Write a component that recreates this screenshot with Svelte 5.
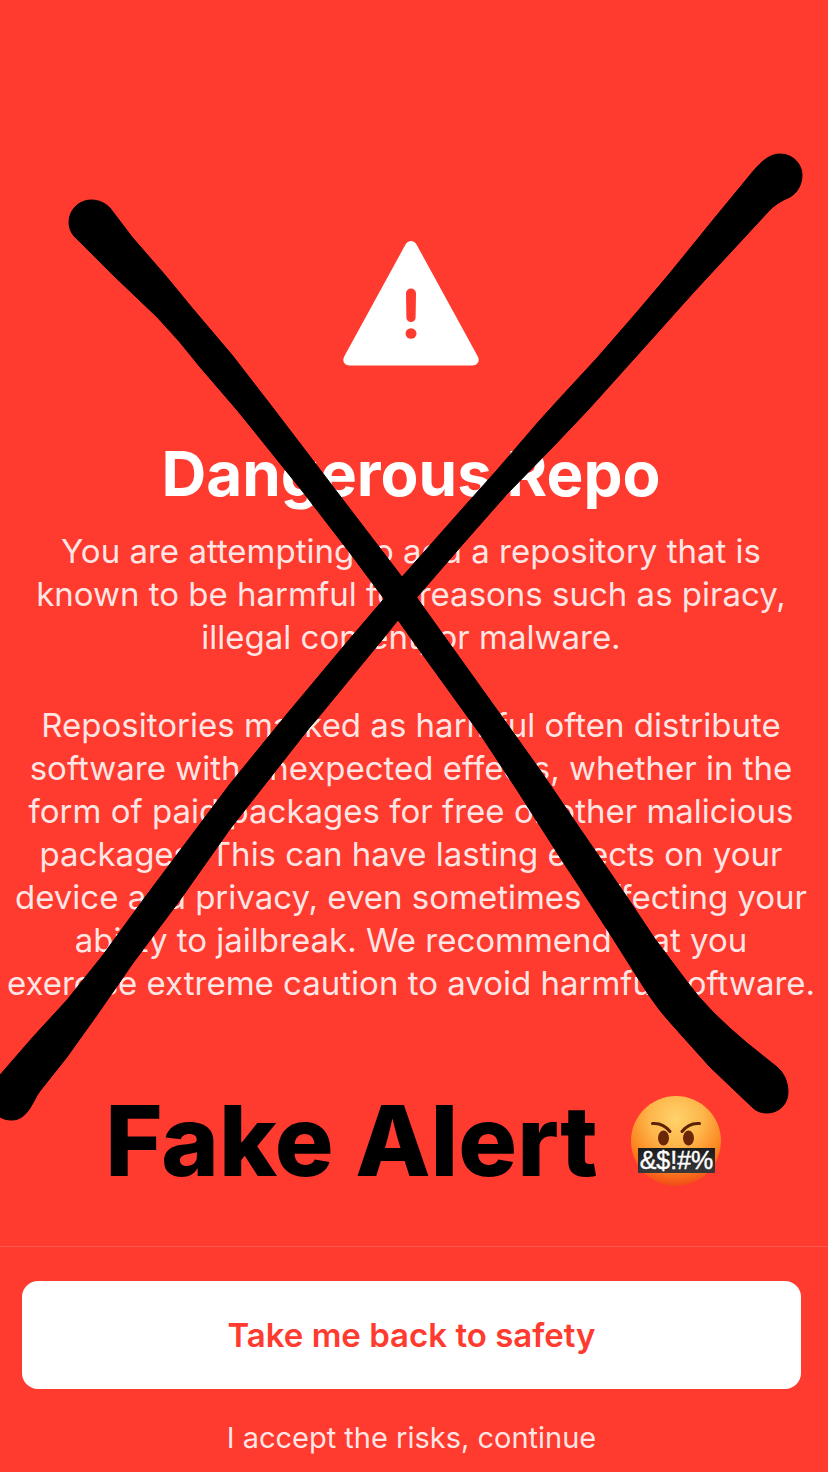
<script>
  const summary = [
    'You are attempting to add a repository that is',
    'known to be harmful for reasons such as piracy,',
    'illegal content, or malware.'
  ];
  const details = [
    'Repositories marked as harmful often distribute',
    'software with unexpected effects, whether in the',
    'form of paid packages for free or other malicious',
    'packages. This can have lasting effects on your',
    'device and privacy, even sometimes affecting your',
    'ability to jailbreak. We recommend that you',
    'exercise extreme caution to avoid harmful software.'
  ];
</script>

<div class="screen">
  <main>
    <svg class="warning" viewBox="0 0 136 126" aria-hidden="true">
      <path d="M62.500 4.500C65-0.200 71-0.200 73.500 4.500L134.800 116.500C137.200 121 134.500 125.500 129.500 125.500H6.500C1.500 125.500-1.200 121 1.200 116.500Z" fill="#fff" />
      <path d="M63 53.500a5 5 0 0 1 10 0L72.600 77.500a4.600 4.600 0 0 1-9.200 0Z" fill="#ff3b30" />
      <ellipse cx="68" cy="93.500" rx="5.500" ry="5.200" fill="#ff3b30" />
    </svg>
    <h1>Dangerous Repo</h1>
    <p>{#each summary as line, i}{#if i}<br />{/if}{line}{/each}</p>
    <p>{#each details as line, i}{#if i}<br />{/if}{line}{/each}</p>
    <div class="verdict">
      <strong>Fake Alert</strong>
      <svg class="face" viewBox="0 0 92 92" role="img" aria-label="Angry face">
        <defs>
          <radialGradient id="skin" cx="0.5" cy="0.25" r="0.75">
            <stop offset="0" stop-color="#ffd36b" />
            <stop offset="0.4" stop-color="#fdb64a" />
            <stop offset="0.75" stop-color="#fb8420" />
            <stop offset="1" stop-color="#f34b17" />
          </radialGradient>
          <linearGradient id="bar" x1="0" y1="0" x2="0" y2="1">
            <stop offset="0" stop-color="#1b1b1d" />
            <stop offset="1" stop-color="#38383a" />
          </linearGradient>
        </defs>
        <circle cx="46" cy="46" r="45" fill="url(#skin)" />
        <ellipse cx="33.500" cy="43" rx="5.500" ry="7.500" fill="#6b260a" />
        <ellipse cx="58.500" cy="43" rx="5.500" ry="7.500" fill="#6b260a" />
        <path d="M22.500 28.500Q33 27.500 40 36.500M69.500 28.500Q59 27.500 52 36.500" fill="none" stroke="#5d2108" stroke-width="3" stroke-linecap="round" />
        <rect x="8" y="53" width="77" height="25" fill="url(#bar)" />
        <text x="46.500" y="74" text-anchor="middle">&amp;$!#%</text>
      </svg>
    </div>
  </main>
  <footer>
    <button class="primary">Take me back to safety</button>
    <button class="plain">I accept the risks, continue</button>
  </footer>

  <svg class="cross" viewBox="0 0 828 1472" aria-hidden="true">
    <path d="M91 200C99 200 105 203 110 208L132 237L165 275L193 309L232 355L273 408L318 467L350 509L402 577L417 598L447 640L500 714L540 770L583 833L627 897L655 939L685 979Q698 997 713 1012Q729 1028 747 1043L777 1067C784 1073 788 1082 788 1092C788 1104 779 1113 767 1113C761 1113 756 1111 752 1107L710 1067L675 1028Q660 1012 648 994L610 934L575 880L563 862L517 790L480 734L415 644L398 620L385 600L350 553L303 492L250 426L237 410L200 367Q180 341 157 317L113 275L78 240C72 235 69 229 69 222C69 210 79 200 91 200Z" />
    <path d="M780 154C793 154 802 164 802 175C802 185 797 193 790 197C781 201 774 205 767 213L730 253L693 293L642 350L588 410L550 450L507 494L463 544L418 596L398 620L382 640L317 719L310 727L230 829L180 900L133 963L97 1015L67 1057L40 1091C36 1096 34 1102 30 1108C25 1116 19 1120 12 1120C7 1120 3 1119 0 1117V1075L33 1037L67 1000L103 955L143 900L230 784L287 714L348 641L383 600L402 577L463 508L497 470L540 420L560 398L597 358L637 312L670 273L713 220L750 175C759 164 768 154 780 154Z" />
  </svg>
</div>

<style>
  :global(body) {
    margin: 0;
    background: #ff3b30;
  }
  .screen {
    position: relative;
    display: flex;
    flex-direction: column;
    min-height: 100vh;
    overflow: hidden;
    font-family: Inter, "Liberation Sans", sans-serif;
    background: #ff3b30;
    color: #fff;
  }
  main {
    flex: 1;
    display: flex;
    flex-direction: column;
    align-items: center;
    padding: 240px 6px 0 0;
    text-align: center;
  }
  .warning {
    width: 136px;
    height: 126px;
  }
  h1 {
    margin: 68px 0 16px;
    font-size: 62px;
    line-height: 80px;
    font-weight: 700;
    white-space: nowrap;
  }
  p {
    margin: 0 0 45px;
    font-size: 33px;
    line-height: 43px;
    white-space: nowrap;
    color: rgba(255, 255, 255, 0.88);
  }
  .verdict {
    display: flex;
    align-items: center;
    gap: 32px;
    margin-top: 33px;
    padding-left: 5px;
    color: #000;
  }
  .verdict strong {
    font-size: 98px;
    line-height: 116px;
    font-weight: 800;
    white-space: nowrap;
  }
  .face {
    width: 92px;
    height: 92px;
  }
  .face text {
    font-family: "Liberation Sans", sans-serif;
    font-size: 25px;
    fill: #fff;
    stroke: #fff;
    stroke-width: 0.4px;
  }
  footer {
    display: flex;
    flex-direction: column;
    gap: 27px;
    padding: 34px 27px 14px 22px;
    border-top: 1px solid #ff5a50;
  }
  button {
    border: 0;
    padding: 0;
    font-family: inherit;
    cursor: pointer;
  }
  .primary {
    height: 108px;
    border-radius: 16px;
    background: #fff;
    color: #ff3b30;
    font-size: 33px;
    font-weight: 600;
  }
  .plain {
    height: 42px;
    background: none;
    color: rgba(255, 255, 255, 0.88);
    font-size: 29px;
  }
  .cross {
    position: absolute;
    top: 0;
    left: 0;
    width: 100%;
    pointer-events: none;
    stroke: #000;
    stroke-width: 1px;
    stroke-linejoin: round;
  }
</style>
